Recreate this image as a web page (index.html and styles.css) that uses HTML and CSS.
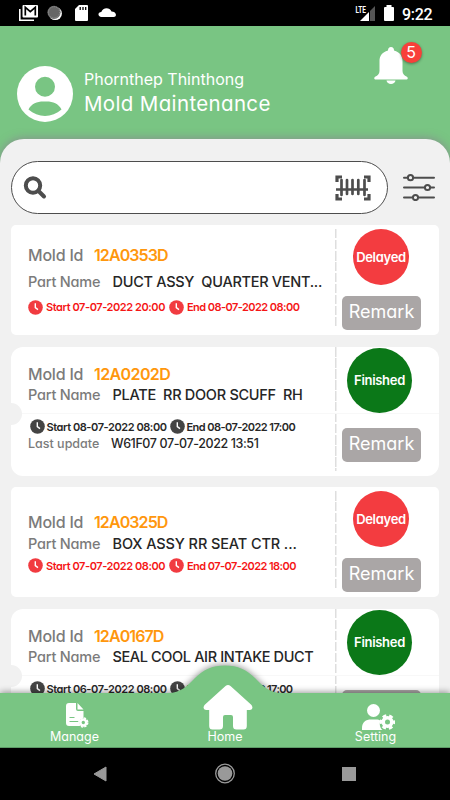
FILE: index.html
```html
<!DOCTYPE html>
<html lang="en">
<head>
<meta charset="utf-8">
<title>Mold Maintenance</title>
<link rel="stylesheet" href="styles.css">
</head>
<body>
<svg class="defs" width="0" height="0">
  <symbol id="clock" viewBox="0 0 15 15"><circle cx="7.5" cy="7.5" r="7.3" fill="currentColor"/><path d="M7.3 3.2V7.6L10 9.6" fill="none" stroke="#fff" stroke-width="1.4"/></symbol>
</svg>
<div class="phone">
  <div class="status">
    <svg width="450" height="26" viewBox="0 0 450 26">
      <path d="M19.8 9V20.2H34" fill="none" stroke="#fff" stroke-width="1.6"/>
      <path d="M23.5 5H37Q38 5 38 6V16.500Q38 17.500 37 17.500H23.500Q22.500 17.500 22.500 16.500V6Q22.500 5 23.500 5Z" fill="#fff"/>
      <path d="M25.300 15.500V7.300L30.300 11.700L35.300 7.300V15.500" fill="none" stroke="#000" stroke-width="1.700"/>
      <circle cx="55.300" cy="13.500" r="6.600" fill="#fff"/><circle cx="54" cy="12.300" r="6.600" fill="#666"/><circle cx="54" cy="12.300" r="5.600" fill="none" stroke="#999" stroke-dasharray="1 1"/>
      <path d="M79 5H87Q88 5 88 6V20Q88 21 87 21H76Q75 21 75 20V9Z" fill="#fff"/><path d="M80.200 7V10M83 7V10M85.700 7V10" stroke="#000" stroke-width="1.300"/>
      <path d="M101.500 17C97.500 16.500 97.500 12 101.300 12C102.500 7.500 109.500 6.500 111.500 11.500C116.500 11.500 117.500 17 113.500 17Z" fill="#fff"/>
      <path d="M369 12V21H360Z" fill="#fff"/><path d="M370 11L375 6V21H370Z" fill="#555"/>
      <path d="M386.500 5H391.500V7H393.200Q394 7 394 8V20Q394 21 393 21H385Q384 21 384 20V8Q384 7 385 7H386.500Z" fill="#fff"/>
      <text class="lte" x="355.500" y="12.500" textLength="10.500" lengthAdjust="spacingAndGlyphs">LTE</text>
      <text class="time" x="402" y="19.500" textLength="30.500">9:22</text>
    </svg>
  </div>

  <header class="header">
    <svg class="avatar" viewBox="0 0 56 56"><circle cx="28" cy="28" r="28" fill="#fff"/><circle cx="28" cy="20.700" r="10" fill="#79c583"/><path d="M11.500 43.500C15 37 20.500 35.300 28 35.600C35.500 35.300 41 37 44.500 43.500C35 52 21 52 11.500 43.500Z" fill="#79c583"/></svg>
    <div class="who">
      <div class="user">Phornthep Thinthong</div>
      <div class="app">Mold Maintenance</div>
    </div>
    <div class="bell">
      <svg width="34" height="37" viewBox="0 0 34 37"><path d="M17 0C19 0 20 1.500 20 3.400C26 5 28.500 9 28.500 14V24C28.500 27 30.500 28.500 32.500 29.500C34.500 30.500 34 32.500 32 32.500H2C0 32.500-.5 30.500 1.500 29.500C3.500 28.500 5.500 27 5.500 24V14C5.500 9 8 5 14 3.400C14 1.500 15 0 17 0ZM12.500 33.500H21.500C21 38 13 38 12.500 33.500Z" fill="#fff"/></svg>
      <span class="badge">5</span>
    </div>
  </header>

  <main class="panel">
    <div class="tools">
      <div class="search">
        <svg width="24" height="24" viewBox="0 0 24 24" fill="none" stroke="#4d4d4d"><circle cx="10" cy="9.500" r="7.200" stroke-width="4"/><path d="M15.500 15L21 20.500" stroke-width="4" stroke-linecap="round"/></svg>
        <svg width="36" height="26" viewBox="0 0 36 26" fill="none" stroke="#4d4d4d"><path d="M2 7V2H7M29 2H34V7M2 19V24H7M29 24H34V19" stroke-width="3.200"/><path d="M6.500 5V20M12 5V19M17.500 5V19M23.300 5V19M29.500 5V20" stroke-width="2.700" stroke-linecap="round"/><path d="M1 14.500H33" stroke-width="2.600"/></svg>
      </div>
      <svg class="filter" width="32" height="28" viewBox="0 0 32 28" stroke="#4d4d4d" stroke-width="2" stroke-linecap="round" fill="#f1f1f1"><path d="M1 4.700H31M1 14.500H31M1 24.500H31"/><circle cx="7.500" cy="4.700" r="2.600"/><circle cx="24.500" cy="14.500" r="2.600"/><circle cx="12.500" cy="24.500" r="2.600"/></svg>
    </div>

    <article class="card late first">
      <div class="info">
        <div class="row mold"><span class="key">Mold Id</span><span class="id">12A0353D</span></div>
        <div class="row part"><span class="key">Part Name</span><span class="val">DUCT ASSY&nbsp; QUARTER VENT...</span></div>
        <div class="row dates"><svg><use href="#clock"/></svg><span class="start">Start 07-07-2022 20:00</span><svg><use href="#clock"/></svg><span class="end">End 08-07-2022 08:00</span></div>
      </div>
      <div class="side"><span class="state">Delayed</span><span class="remark">Remark</span></div>
    </article>

    <article class="card ticket">
      <div class="info">
        <div class="row mold"><span class="key">Mold Id</span><span class="id wide">12A0202D</span></div>
        <div class="row part"><span class="key">Part Name</span><span class="val">PLATE&nbsp; RR DOOR SCUFF&nbsp; RH</span></div>
        <div class="row dates"><svg><use href="#clock"/></svg><span class="start">Start 08-07-2022 08:00</span><svg><use href="#clock"/></svg><span class="end">End 08-07-2022 17:00</span></div>
        <div class="row update"><span class="key">Last update</span><span class="val">W61F07 07-07-2022 13:51</span></div>
      </div>
      <div class="side"><span class="state">Finished</span><span class="remark">Remark</span></div>
    </article>

    <article class="card late">
      <div class="info">
        <div class="row mold"><span class="key">Mold Id</span><span class="id">12A0325D</span></div>
        <div class="row part"><span class="key">Part Name</span><span class="val loose">BOX ASSY RR SEAT CTR ...</span></div>
        <div class="row dates"><svg><use href="#clock"/></svg><span class="start">Start 07-07-2022 08:00</span><svg><use href="#clock"/></svg><span class="end">End 07-07-2022 18:00</span></div>
      </div>
      <div class="side"><span class="state">Delayed</span><span class="remark">Remark</span></div>
    </article>

    <article class="card ticket">
      <div class="info">
        <div class="row mold"><span class="key">Mold Id</span><span class="id">12A0167D</span></div>
        <div class="row part"><span class="key">Part Name</span><span class="val tight">SEAL COOL AIR INTAKE DUCT</span></div>
        <div class="row dates"><svg><use href="#clock"/></svg><span class="start">Start 06-07-2022 08:00</span><svg><use href="#clock"/></svg><span class="end tight">End 07-07-2022 17:00</span></div>
      </div>
      <div class="side"><span class="state">Finished</span><span class="remark">Remark</span></div>
    </article>
  </main>

  <nav class="tabs">
    <svg class="tabs-bg" width="450" height="83" viewBox="0 0 450 83"><path d="M0 28H168C181 28 187 21 195 13C203 5 212 .5 225 .5C238 .5 247 5 255 13C263 21 269 28 282 28H450V83H0Z" fill="#79c583"/><path d="M0 82.500H450" stroke="#5c9a66"/></svg>
    <div class="tab manage">
      <svg width="23" height="25" viewBox="0 0 23 25"><path d="M3 0H10V6Q10 8 12 8H17.500V15C13 16 12 20 14 23H3Q0 23 0 20V3Q0 0 3 0ZM11.500 0L17.500 6.500H11.500Z" fill="#fff"/><path d="M3.500 14.500H8.500M3.500 18.500H13" stroke="#79c583" stroke-width="1.200"/><circle cx="17.300" cy="19.500" r="3" fill="none" stroke="#fff" stroke-width="2.600"/><circle cx="17.300" cy="19.500" r="4.500" fill="none" stroke="#fff" stroke-width="1.400" stroke-dasharray="2.300 1.230"/></svg>
      <span>Manage</span>
    </div>
    <div class="tab home">
      <svg width="50" height="45" viewBox="0 0 50 45"><path d="M22.500 1Q25 -.8 27.500 1L48.500 20Q51 24.500 47 25H43.800V41Q43.800 44.500 40.500 44.500H33.500Q30 44.500 30 41V32Q30 30 28 30H22Q20 30 20 32V41Q20 44.500 16.500 44.500H9.500Q6.200 44.500 6.200 41V25H3Q-1 24.500 1.500 20Z" fill="#fff"/></svg>
      <span>Home</span>
    </div>
    <div class="tab setting">
      <svg width="33" height="26" viewBox="0 0 33 26"><circle cx="11.500" cy="6.500" r="6.500" fill="#fff"/><path d="M0 26V24C0 18 4 15.500 9 15.500H14C16 15.500 17.500 16 18.500 16.500C17 20 18 24 20.500 26Z" fill="#fff"/><circle cx="25.500" cy="18" r="4.300" fill="none" stroke="#fff" stroke-width="3.600"/><circle cx="25.500" cy="18" r="6.600" fill="none" stroke="#fff" stroke-width="2.400" stroke-dasharray="3.900 3.011" stroke-dashoffset="1.900"/></svg>
      <span>Setting</span>
    </div>
  </nav>

  <div class="system">
    <svg width="450" height="52" viewBox="0 0 450 52"><path d="M94 26L106 19V33Z" fill="#999" stroke="#999" stroke-linejoin="round"/><circle cx="225" cy="25.500" r="9.300" fill="none" stroke="#999" stroke-width="1.300"/><circle cx="225" cy="25.500" r="7.300" fill="#999"/><rect x="342" y="19" width="14" height="14" fill="#999"/></svg>
  </div>
</div>
</body>
</html>
```
FILE: styles.css
```css
* { box-sizing: border-box; }
body { margin: 0; background: #000; font-family: Inter, "Liberation Sans", sans-serif; font-feature-settings: "cv11" 1; }
svg { display: block; }
.defs { position: absolute; }
.phone { width: 450px; height: 800px; display: flex; flex-direction: column; overflow: hidden; background: linear-gradient(#79c583 0 200px, #000 200px); }
.status { height: 26px; flex: none; background: #000; }
.lte { font: bold 9.500px Roboto, sans-serif; fill: #fff; }
.time { font: 500 16px Roboto, sans-serif; fill: #fff; }

.header { height: 113px; flex: none; background: #79c583; display: flex; padding: 39.500px 0 0 17px; color: #fff; }
.avatar { width: 56px; height: 56px; }
.who { margin-left: 11px; width: 290px; padding-top: 1.500px; white-space: nowrap; }
.user { font-size: 16px; line-height: 24px; }
.app { font-size: 20.500px; line-height: 26px; letter-spacing: .35px; }
.bell { position: relative; margin-top: -18.500px; width: 34px; height: 37px; }
.badge { position: absolute; left: 26.500px; top: -5px; width: 21px; height: 21px; border-radius: 50%; background: #f8403a; text-align: center; font-size: 16px; line-height: 20px; box-shadow: 0 1px 3px rgba(0,0,0,.4); }

.panel { height: 554px; flex: none; overflow: hidden; position: relative; background: #f1f1f1; border-radius: 24px 24px 0 0; padding: 22px 11px 0; display: flex; flex-direction: column; gap: 11.500px; box-shadow: 0 -1px 9px rgba(140,125,145,.7); }
.tools { display: flex; flex: none; height: 53px; }
.search { width: 377px; height: 53px; border: 1px solid #4d4d4d; border-radius: 27px; background: #fff; display: flex; justify-content: space-between; padding: 14px 16px 0 11px; }
.search svg:last-child { margin-top: -1px; }
.filter { margin: 12px 0 0 15px; }

.card { position: relative; display: flex; flex: none; width: 428px; height: 110px; background: #fff; border-radius: 5px; overflow: hidden; }
.card.first { margin-top: -.5px; }
.ticket { height: 129px; border-radius: 12px; }
.ticket::before { content: ""; position: absolute; left: -11px; top: 56px; width: 22px; height: 22px; border-radius: 50%; background: #f1f1f1; }
.ticket::after { content: ""; position: absolute; left: 11px; right: 0; top: 66px; height: 1px; background: #f8f8f8; }
.info { width: 323.500px; flex: none; padding: 24px 0 0 17px; }
.first .info { padding-top: 17px; }
.ticket .info { padding-top: 16px; }
.row { display: flex; align-items: center; white-space: nowrap; }
.mold { height: 21px; font-size: 16px; }
.part { height: 23px; font-size: 14.500px; }
.dates { height: 21px; font-size: 11px; font-weight: 600; color: #262626; }
.late .dates { color: #f51616; }
.first .mold { height: 26px; }
.first .part { height: 26px; }
.first .dates { height: 26px; }
.ticket .mold { height: 22px; }
.ticket .part { height: 20px; }
.ticket .dates { height: 16px; margin-top: 14px; padding-left: 2px; }
.update { height: 17px; font-size: 12.500px; }
.key { color: #7b7b7b; font-weight: 550; width: 84.500px; flex: none; letter-spacing: -.2px; }
.mold .key { width: 66px; }
.id { color: #ff970d; font-weight: 600; letter-spacing: -.9px; }
.id.wide { letter-spacing: -.6px; }
.val { color: #262626; font-weight: 550; letter-spacing: -.28px; }
.val.loose { letter-spacing: -.1px; }
.val.tight { letter-spacing: -.37px; }
.update .key { width: 83px; letter-spacing: 0; }
.update .val { letter-spacing: -.4px; }
.dates svg { width: 15px; height: 15px; flex: none; margin-right: 3px; color: #f13b40; }
.ticket .dates svg { color: #444; margin-right: 1.500px; }
.start { width: 123px; flex: none; letter-spacing: -.43px; }
.end { letter-spacing: -.56px; }
.end.tight { letter-spacing: -.65px; }
.ticket .start { width: 123.500px; }

.side { width: 104.500px; position: relative; padding: 4px 0 0 7.500px; background: repeating-linear-gradient(#dedede 0 9.500px, transparent 9.500px 11px) 0 4px / 1.500px 97px no-repeat; }
.ticket .side { padding-top: 1px; background-position: 0 0; background-size: 1.500px 124px; }
.state { width: 56px; height: 56px; margin-left: 11px; border-radius: 50%; background: #f33c40; color: #fff; font-size: 13px; font-weight: 600; line-height: 57px; display: flex; justify-content: center; letter-spacing: -.3px; }
.ticket .state { width: 65px; height: 65px; margin-left: 5px; background: #0b7818; line-height: 65px; }
.remark { display: block; width: 79px; height: 34px; margin-top: 11px; border-radius: 5px; background: #aaa6a6; color: #fff; font-size: 18px; line-height: 31px; text-align: center; }
.ticket .remark { margin-top: 15px; }

.tabs { position: relative; height: 55px; flex: none; display: flex; justify-content: space-between; padding: 0 37px; color: #fff; }
.tabs-bg { position: absolute; left: 0; bottom: 0; filter: drop-shadow(0 -1px 3px rgba(0,0,0,.4)); }
.tab { position: relative; width: 75px; display: flex; flex-direction: column; align-items: center; justify-content: flex-end; font-size: 12.500px; }
.tab span { line-height: 15px; margin-bottom: 4.500px; }
.tab svg { flex: none; margin-left: 5px; }
.manage svg { margin-bottom: .5px; }
.home svg { margin-bottom: -1px; }
.setting svg { margin-left: 6px; margin-bottom: -1px; }
.system { height: 52px; flex: none; background: #000; position: relative; }
```
